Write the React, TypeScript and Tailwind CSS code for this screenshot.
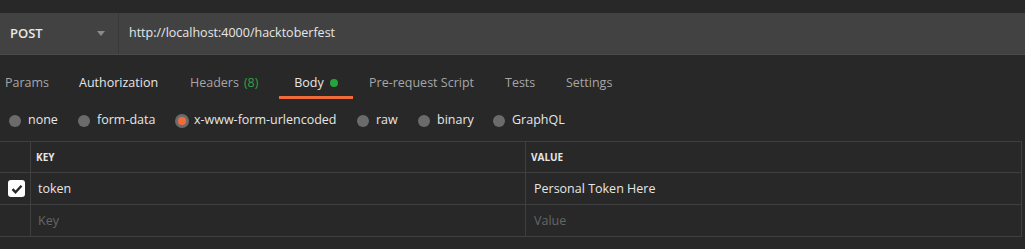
import React from "react";

const font = { fontFamily: '"Open Sans", "Noto Sans", sans-serif' };

function Radio({ label, selected, w }: { label: string; selected?: boolean; w: string }) {
  return (
    <div className={`flex items-center ${w}`}>
      {selected ? (
        <span className="flex h-[14px] w-[14px] items-center justify-center rounded-full bg-[#6b6b6b]">
          <span className="h-[8px] w-[8px] rounded-full bg-[#f26b3a]" />
        </span>
      ) : (
        <span className="h-[12px] w-[12px] rounded-full bg-[#6b6b6b]" />
      )}
      <span className={`${selected ? "ml-[5px]" : "ml-[7px]"} text-[12.5px] text-[#e6e6e6]`}>{label}</span>
    </div>
  );
}

export default function App() {
  return (
    <div className="h-[249px] w-[1025px] overflow-hidden bg-[#282828]" style={font}>
      <div className="h-[13px]" />
      {/* URL bar */}
      <div className="flex h-[42px] border-b border-[#4a4a4a] bg-[#424242]">
        <div className="flex w-[119px] items-center justify-between border-r border-[#383838] pl-[10px] pr-[13px]">
          <span className="text-[13px] font-semibold text-[#e8e8e8]">POST</span>
          <svg width="8" height="5" viewBox="0 0 8 5">
            <path d="M0 0 L8 0 L4 5 Z" fill="#8a8a8a" />
          </svg>
        </div>
        <div className="flex items-center pl-[10px] text-[12.5px] text-[#e6e6e6]">
          http://localhost:4000/hacktoberfest
        </div>
      </div>
      {/* Tabs */}
      <div className="flex h-[45px] items-stretch pl-[5px] text-[12.5px]">
        <div className="flex w-[74px] items-center pt-[11px] text-[#a6a6a6]">Params</div>
        <div className="flex w-[111px] items-center pt-[11px] text-[#e6e6e6]">Authorization</div>
        <div className="flex w-[89px] items-center pt-[11px] text-[#a6a6a6]">
          Headers<span className="ml-[5px] text-[#2ea043]">(8)</span>
        </div>
        <div className="relative flex w-[74px] items-center justify-center pt-[11px] text-[#e6e6e6]">
          Body
          <span className="ml-[6px] h-[8px] w-[8px] rounded-full bg-[#25a43c]" />
          <span className="absolute bottom-[1px] left-0 right-0 h-[3px] bg-[#f26b3a]" />
        </div>
        <div className="ml-[16px] flex w-[136px] items-center pt-[11px] text-[#a6a6a6]">Pre-request Script</div>
        <div className="flex w-[61px] items-center pt-[11px] text-[#a6a6a6]">Tests</div>
        <div className="flex items-center pt-[11px] text-[#a6a6a6]">Settings</div>
      </div>
      {/* Radios */}
      <div className="flex h-[41px] items-center pl-[9px]">
        <Radio label="none" w="w-[69px]" />
        <Radio label="form-data" w="w-[97px]" />
        <Radio label="x-www-form-urlencoded" selected w="w-[182px]" />
        <Radio label="raw" w="w-[61px]" />
        <Radio label="binary" w="w-[75px]" />
        <Radio label="GraphQL" w="" />
      </div>
      {/* Table */}
      <div className="w-[1022px] border-r border-[#3f3f3f]">
        <div className="grid h-[32px] grid-cols-[31px_495px_1fr] border-t border-b border-[#3f3f3f]">
          <div className="border-r border-[#3f3f3f]" />
          <div className="flex items-center border-r border-[#3f3f3f] pl-[5px] text-[10px] font-bold text-[#e6e6e6]">KEY</div>
          <div className="flex items-center pl-[5px] text-[10px] font-bold text-[#e6e6e6]">VALUE</div>
        </div>
        <div className="grid h-[32px] grid-cols-[31px_495px_1fr] border-b border-[#3f3f3f]">
          <div className="flex items-center border-r border-[#3f3f3f] pl-[8px]">
            <span className="flex h-[17px] w-[17px] items-center justify-center rounded-[3px] bg-white">
              <svg width="12" height="10" viewBox="0 0 12 10">
                <path d="M1.5 5.2 L4.5 8.2 L10.5 1.8" stroke="#282828" strokeWidth="2.4" fill="none" />
              </svg>
            </span>
          </div>
          <div className="flex items-center border-r border-[#3f3f3f] pl-[7px] pt-[1px] text-[12.5px] text-[#e6e6e6]">token</div>
          <div className="flex items-center pl-[8px] pt-[1px] text-[12.5px] text-[#e6e6e6]">Personal Token Here</div>
        </div>
        <div className="grid h-[32px] grid-cols-[31px_495px_1fr] border-b border-[#3f3f3f]">
          <div className="border-r border-[#3f3f3f]" />
          <div className="flex items-center border-r border-[#3f3f3f] pl-[7px] pt-[1px] text-[12.5px] text-[#666666]">Key</div>
          <div className="flex items-center pl-[8px] pt-[1px] text-[12.5px] text-[#666666]">Value</div>
        </div>
      </div>
    </div>
  );
}
